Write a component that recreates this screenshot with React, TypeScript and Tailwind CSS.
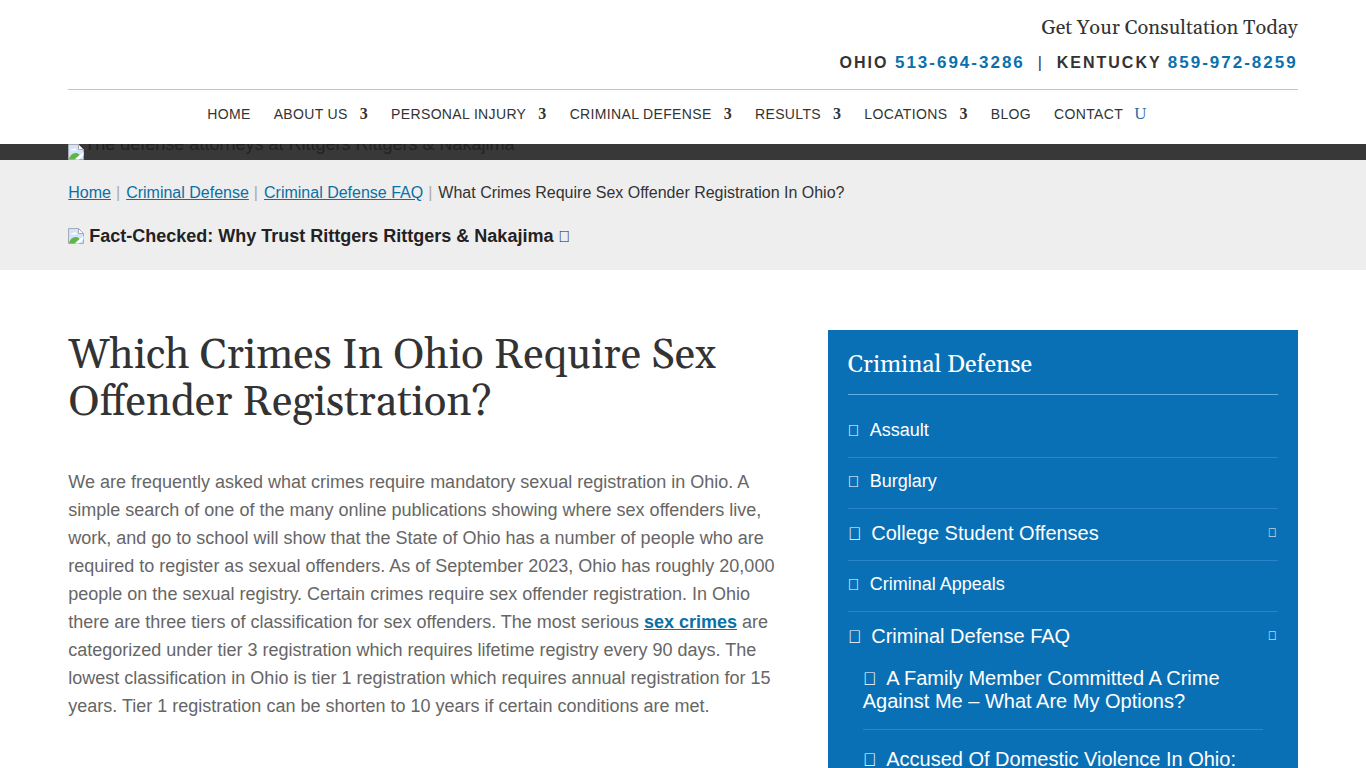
import React from "react";

interface NavItem {
  label: string;
  hasMenu?: boolean;
}

interface PracticeLink {
  label: string;
  large?: boolean;
  children?: string[];
}

const navItems: NavItem[] = [
  { label: "Home" },
  { label: "About Us", hasMenu: true },
  { label: "Personal Injury", hasMenu: true },
  { label: "Criminal Defense", hasMenu: true },
  { label: "Results", hasMenu: true },
  { label: "Locations", hasMenu: true },
  { label: "Blog" },
  { label: "Contact" },
];

const crumbs = ["Home", "Criminal Defense", "Criminal Defense FAQ"];

const practiceLinks: PracticeLink[] = [
  { label: "Assault" },
  { label: "Burglary" },
  { label: "College Student Offenses", large: true },
  { label: "Criminal Appeals" },
  {
    label: "Criminal Defense FAQ",
    large: true,
    children: [
      "A Family Member Committed A Crime Against Me – What Are My Options?",
      "Accused Of Domestic Violence In Ohio: What Happens Next?",
    ],
  },
];

const serif = "font-[Georgia,Gelasio,'DejaVu_Serif',serif]";

const BrokenImage: React.FC<{ className?: string }> = ({ className = "" }) => (
  <svg viewBox="0 0 16 16" className={`h-4 w-4 ${className}`} aria-hidden="true">
    <path d="M.5.5h10l5 5v10H.5z" fill="#d3e3fb" stroke="#a9a9b4" />
    <path d="M10.5.5v5h5z" fill="#fff" stroke="#a9a9b4" />
    <path d="M3 6.500a1.600 1.600 0 0 1 2-1.500 2 2 0 0 1 3.500 1.500z" fill="#fff" />
    <path d="M1 15c1-4 4-6 7-6 2 0 3 1 3.500 2L7 15z" fill="#5fb548" />
    <path d="M7 15.500 15.500 8v3L11 15.500z" fill="#fff" />
  </svg>
);

const Header: React.FC = () => (
  <header className="bg-white">
    <div className="mx-auto w-[90%]">
      <div className="flex flex-col items-end border-b border-[#c4c4c4] pt-4 pb-4 text-[#333]">
        <p className={`${serif} text-[20px] leading-6`}>Get Your Consultation Today</p>
        <p className="mt-[13px] text-[16px] leading-5 font-bold tracking-[2px] whitespace-pre">
          OHIO{" "}
          <a href="#ohio" className="text-[17px] text-[#0a70ae]">513-694-3286</a>
          <span className="font-normal">{"  |  "}</span>KENTUCKY{" "}
          <a href="#kentucky" className="text-[17px] text-[#0a70ae]">859-972-8259</a>
        </p>
      </div>
      <nav className="flex h-[54px] items-start justify-center gap-[23px] pt-[14px] pr-3 text-[14px] leading-5 tracking-wide text-[#333] uppercase">
        {navItems.map((item) => (
          <a key={item.label} href="#nav" className="flex items-center gap-3">
            {item.label}
            {item.hasMenu && (
              <span className="font-['Liberation_Serif',serif] text-[16px] font-bold">3</span>
            )}
          </a>
        ))}
        <button
          type="button"
          aria-label="Search"
          className="-ml-3 font-['Liberation_Serif',serif] text-[17px] leading-5 text-[#2f6fa0]"
        >
          U
        </button>
      </nav>
    </div>
  </header>
);

const Sidebar: React.FC = () => (
  <aside className="bg-[#0a70b5] px-5 pt-[22px] text-white">
    <h2 className={`${serif} border-b border-[#5fb0e6] pb-[15px] text-[24px] leading-[27px]`}>
      Criminal Defense
    </h2>
    <ul className="pt-3">
      {practiceLinks.map((link) => (
        <li key={link.label} className="border-b border-[#2b85c9]">
          <a
            href="#practice"
            className={`flex items-center justify-between pb-1 ${link.large ? "h-[51px] text-[20px]" : "h-[50px] text-[18px]"}`}
          >
            <span>
              <span className={`mr-[10px] leading-none ${link.large ? "text-[18px]" : "text-[16px]"}`}>
                {"\uf054"}
              </span>
              {link.label}
            </span>
            {link.large && <span className="pr-px text-[12px]">{"\uf078"}</span>}
          </a>
          {link.children && (
            <ul className="px-[15px] text-[20px] leading-[23px]">
              {link.children.map((child) => (
                <li key={child} className="mb-[14px] border-b border-[#2b85c9] pt-1 pb-4">
                  <a href="#faq">
                    <span className="mr-[10px] text-[18px] leading-none">{"\uf054"}</span>
                    {child}
                  </a>
                </li>
              ))}
            </ul>
          )}
        </li>
      ))}
    </ul>
  </aside>
);

const App: React.FC = () => (
  <div className="h-screen overflow-hidden bg-white font-['Liberation_Sans',Arial,sans-serif]">
    <Header />

    <div className="h-4 overflow-hidden bg-[#383838]">
      <div className="mx-auto flex w-[90%] items-start">
        <BrokenImage className="shrink-0" />
        <span className="-mt-3 text-[18px] leading-6 text-[#222]">
          The defense attorneys at Rittgers Rittgers &amp; Nakajima
        </span>
      </div>
    </div>

    <div className="bg-[#eee]">
      <div className="mx-auto w-[90%] pt-[21px] pb-5">
        <div className="text-[16px] leading-6 text-[#333]">
          {crumbs.map((crumb) => (
            <React.Fragment key={crumb}>
              <a href="#crumb" className="text-[#0a70a5] underline">{crumb}</a>
              <span className="mr-[6px] ml-[5px] text-[#aaa]">|</span>
            </React.Fragment>
          ))}
          What Crimes Require Sex Offender Registration In Ohio?
        </div>
        <div className="mt-[17px] flex h-7 items-center gap-[5px] text-[18px] font-bold text-[#222]">
          <BrokenImage />
          <span>
            Fact-Checked: Why Trust Rittgers Rittgers &amp; Nakajima{" "}
            <span className="text-[16px]">{"\uf078"}</span>
          </span>
        </div>
      </div>
    </div>

    <div className="mx-auto grid w-[90%] grid-cols-[1fr_470px] gap-[50px] pt-[60px]">
      <main>
        <h1 className={`${serif} pt-[2px] text-[42px] leading-[47px] text-[#333]`}>
          Which Crimes In Ohio Require Sex Offender Registration?
        </h1>
        <p className="mt-[42px] text-[18px] leading-7 text-[#666]">
          We are frequently asked what crimes require mandatory sexual registration in Ohio. A
          simple search of one of the many online publications showing where sex offenders live,
          work, and go to school will show that the State of Ohio has a number of people who are
          required to register as sexual offenders. As of September 2023, Ohio has roughly 20,000
          people on the sexual registry. Certain crimes require sex offender registration. In Ohio
          there are three tiers of classification for sex offenders. The most serious{" "}
          <a href="#sex-crimes" className="font-bold text-[#0a70a5] underline">sex crimes</a> are
          categorized under tier 3 registration which requires lifetime registry every 90 days. The
          lowest classification in Ohio is tier 1 registration which requires annual registration
          for 15 years. Tier 1 registration can be shorten to 10 years if certain conditions are
          met.
        </p>
      </main>
      <Sidebar />
    </div>
  </div>
);

export default App;
